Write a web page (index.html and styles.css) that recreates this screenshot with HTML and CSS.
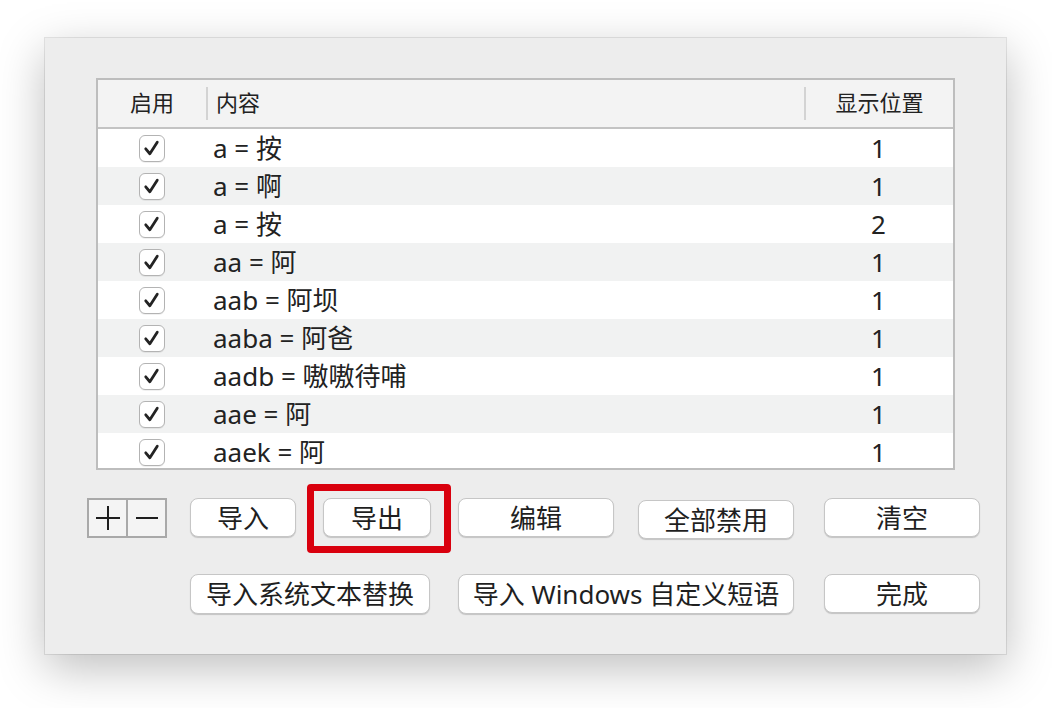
FILE: index.html
```html
<!DOCTYPE html>
<html lang="zh">
<head>
<meta charset="utf-8">
<link rel="stylesheet" href="styles.css">
</head>
<body>
<div class="window">
  <div class="table">
    <div class="thead">
      <div class="th c1">启用</div>
      <div class="th c2">内容</div>
      <div class="th c3">显示位置</div>
    </div>
    <div class="tbody">
      <div class="row"><div class="c1"><span class="cb"><svg viewBox="0 0 28 28"><path d="M7 15 L12 21 L21 7"/></svg></span></div><div class="c2">a = 按</div><div class="c3">1</div></div>
      <div class="row"><div class="c1"><span class="cb"><svg viewBox="0 0 28 28"><path d="M7 15 L12 21 L21 7"/></svg></span></div><div class="c2">a = 啊</div><div class="c3">1</div></div>
      <div class="row"><div class="c1"><span class="cb"><svg viewBox="0 0 28 28"><path d="M7 15 L12 21 L21 7"/></svg></span></div><div class="c2">a = 按</div><div class="c3">2</div></div>
      <div class="row"><div class="c1"><span class="cb"><svg viewBox="0 0 28 28"><path d="M7 15 L12 21 L21 7"/></svg></span></div><div class="c2">aa = 阿</div><div class="c3">1</div></div>
      <div class="row"><div class="c1"><span class="cb"><svg viewBox="0 0 28 28"><path d="M7 15 L12 21 L21 7"/></svg></span></div><div class="c2">aab = 阿坝</div><div class="c3">1</div></div>
      <div class="row"><div class="c1"><span class="cb"><svg viewBox="0 0 28 28"><path d="M7 15 L12 21 L21 7"/></svg></span></div><div class="c2">aaba = 阿爸</div><div class="c3">1</div></div>
      <div class="row"><div class="c1"><span class="cb"><svg viewBox="0 0 28 28"><path d="M7 15 L12 21 L21 7"/></svg></span></div><div class="c2">aadb = 嗷嗷待哺</div><div class="c3">1</div></div>
      <div class="row"><div class="c1"><span class="cb"><svg viewBox="0 0 28 28"><path d="M7 15 L12 21 L21 7"/></svg></span></div><div class="c2">aae = 阿</div><div class="c3">1</div></div>
      <div class="row"><div class="c1"><span class="cb"><svg viewBox="0 0 28 28"><path d="M7 15 L12 21 L21 7"/></svg></span></div><div class="c2">aaek = 阿</div><div class="c3">1</div></div>
    </div>
  </div>

  <div class="actions">
    <div class="pm">
      <span class="pm-btn"><svg viewBox="0 0 24 24"><path d="M0 12 H24 M12 0 V24"/></svg></span>
      <span class="pm-btn"><svg viewBox="0 0 24 24"><path d="M1 12 H23"/></svg></span>
    </div>
    <button class="btn w-s">导入</button>
    <div class="hl-wrap"><button class="btn w-m">导出</button><span class="highlight"></span></div>
    <button class="btn w-l">编辑</button>
    <button class="btn w-l btn-low">全部禁用</button>
    <button class="btn w-l">清空</button>

    <div class="spacer"></div>
    <button class="btn span2 w-xl">导入系统文本替换</button>
    <button class="btn span2 w-xxl">导入 Windows 自定义短语</button>
    <button class="btn w-l">完成</button>
  </div>
</div>
</body>
</html>
```

FILE: styles.css
```css
html, body {
  margin: 0;
  padding: 0;
  background: #ffffff;
  height: 100%;
}

body {
  font-family: "Noto Sans", "Noto Sans CJK SC", sans-serif;
  color: #222222;
  overflow: hidden;
}

.window {
  margin: 38px 0 0 45px;
  width: 961px;
  height: 616px;
  box-sizing: border-box;
  background: #ededed;
  padding-top: 40px;
  box-shadow: 0 0 0 1px rgba(0, 0, 0, 0.09), 0 14px 44px rgba(0, 0, 0, 0.26);
}

.table {
  margin-left: 51px;
  width: 859px;
  border: 2px solid #bdbdbd;
  box-sizing: border-box;
  background: #ffffff;
}

.thead {
  display: grid;
  grid-template-columns: 108px 598px 149px;
  height: 47px;
  background: #f3f3f3;
  border-bottom: 2px solid #c3c3c3;
}

.th {
  display: flex;
  align-items: center;
  font-size: 22px;
  margin: 7px 0;
  padding-bottom: 3px;
  line-height: 1;
}

.th.c1 { justify-content: center; }
.th.c2 { border-left: 2px solid #d3d3d3; padding-left: 8px; }
.th.c3 { border-left: 2px solid #d3d3d3; justify-content: center; }

.tbody {
  height: 339px;
  overflow: hidden;
}

.row {
  display: grid;
  grid-template-columns: 108px 598px 149px;
  height: 38px;
  align-items: center;
  font-size: 26px;
  line-height: 1;
}

.row:nth-child(even) { background: #f1f2f2; }

.row .c1 {
  display: flex;
  justify-content: center;
}

.row .c2 { padding-left: 7px; }
.row .c3 { text-align: center; }

.cb {
  display: block;
  width: 26px;
  height: 27px;
  box-sizing: border-box;
  border: 1.5px solid #b3b3b3;
  border-radius: 6px;
  background: #ffffff;
  box-shadow: 0 1px 0 rgba(0, 0, 0, 0.06);
}

.cb svg {
  display: block;
  width: 23px;
  height: 24px;
}

.cb path {
  fill: none;
  stroke: #232323;
  stroke-width: 3.4;
  stroke-linecap: round;
  stroke-linejoin: round;
}

.actions {
  margin: 28px 0 0 42px;
  display: grid;
  grid-template-columns: 103px 133px 135px 180px 186px 156px;
  row-gap: 35px;
  align-items: start;
}

.pm {
  display: flex;
  width: 80px;
  height: 40px;
  border: 2px solid #a9a9a9;
  box-sizing: border-box;
  background: #f4f4f4;
}

.pm-btn {
  flex: 1;
  display: flex;
  align-items: center;
  justify-content: center;
}

.pm-btn svg {
  width: 24px;
  height: 24px;
}

.pm-btn path {
  fill: none;
  stroke: #1e1e1e;
  stroke-width: 2;
}

.pm-btn + .pm-btn { border-left: 2px solid #a9a9a9; }

.btn {
  height: 39px;
  padding: 0;
  border: 1px solid #c6c6c6;
  border-radius: 8px;
  background: #ffffff;
  font-family: "Noto Sans", "Noto Sans CJK SC", sans-serif;
  font-size: 26px;
  line-height: 1;
  color: #1f1f1f;
  box-shadow: 0 1px 1px rgba(0, 0, 0, 0.18);
}

.w-s { width: 106px; }
.w-m { width: 108px; }
.w-l { width: 156px; }
.w-xl { width: 240px; }
.w-xxl { width: 336px; }

.btn-low { margin-top: 2px; }

.span2 { grid-column: span 2; height: 40px; }

.hl-wrap { position: relative; }

.highlight {
  position: absolute;
  left: -16px;
  top: -14px;
  width: 144px;
  height: 69px;
  box-sizing: border-box;
  border: 7px solid #d9000e;
  border-radius: 4px;
}

.spacer { height: 40px; }
```
